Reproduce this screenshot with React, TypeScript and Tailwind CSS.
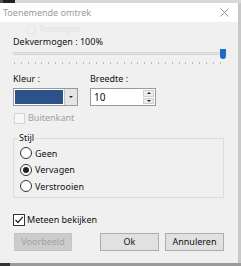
import React from 'react'

const font = { fontFamily: '"Noto Sans", "Open Sans", Arial, sans-serif' }

function Radio({ label, checked }: { label: string; checked?: boolean }) {
  return (
    <div className="flex items-center gap-[3px] h-[16.5px]">
      <span className="w-[12px] h-[12px] rounded-full border border-[#333] bg-white flex items-center justify-center">
        {checked && <span className="w-[6px] h-[6px] rounded-full bg-[#222]" />}
      </span>
      <span>{label}</span>
    </div>
  )
}

export default function App() {
  const ticks = Array.from({ length: 31 })
  return (
    <div className="w-[241px] h-[266px] bg-[#e8e8e8] flex flex-col overflow-hidden text-[9px] text-[#111]" style={font}>
      {/* background peeking through at top */}
      <div className="h-[3px] flex bg-[#d9d9d9]">
        <div className="w-[3px] bg-[#555]" />
        <div className="w-[12px] bg-[#222]" />
        <div className="flex-1" />
      </div>

      <div className="flex-1 flex border-r-[3px] border-[#c8c8c8]">
        <div className="flex-1 flex flex-col bg-[#f0f0f0]">
          {/* title bar */}
          <div className="h-[19px] bg-white flex items-center justify-between pl-[3px] pr-[9px]">
            <span className="text-[#9a9a9a] text-[9px]">Toenemende omtrek</span>
            <svg width="9" height="9" viewBox="0 0 10 10" className="text-[#8a8a8a]">
              <path d="M0.5 0.5 L9.5 9.5 M9.5 0.5 L0.5 9.5" stroke="currentColor" strokeWidth="1" />
            </svg>
          </div>

          <div className="flex-1 flex flex-col pl-[13px] pr-[12px]">
            {/* faint ghost from the window behind */}
            <div className="h-[12px] mt-[1px] pl-[14px] flex items-center gap-[3px] text-[8px] text-[#e2e2e2] leading-[12px]">
              <span className="w-[9px] h-[9px] border border-[#e6e6e6]" />
              <span>Toevoegen</span>
            </div>

            <div className="leading-[14px]">Dekvermogen : 100%</div>

            {/* slider */}
            <div className="relative h-[16px]">
              <div className="absolute left-0 right-0 top-[3px] h-[3px] bg-[#e3e3e3] border border-[#d6d6d6]" />
              <div className="absolute right-0 top-0 w-[6px] h-[10px] bg-[#1e6bc9] rounded-b-[3px]" />
              <div className="absolute left-[1px] right-[5px] top-[13px] flex justify-between">
                {ticks.map((_, i) => (
                  <span key={i} className="w-px h-[2px] bg-[#b8b8b8]" />
                ))}
              </div>
            </div>

            {/* Kleur / Breedte */}
            <div className="flex mt-[7px] gap-[12px]">
              <div className="flex flex-col w-[65px]">
                <span className="leading-[14px]">Kleur :</span>
                <div className="mt-[2px] h-[18px] flex border border-[#9a9a9a] bg-white">
                  <div className="flex-1 m-[1px] bg-[#2c5289]" />
                  <div className="w-[13px] bg-[#e5e5e5] border-l border-[#c4c4c4] flex items-center justify-center">
                    <span className="w-0 h-0 border-l-[2px] border-r-[2px] border-t-[2px] border-l-transparent border-r-transparent border-t-[#222]" />
                  </div>
                </div>
              </div>
              <div className="flex flex-col w-[66px]">
                <span className="leading-[14px]">Breedte :</span>
                <div className="mt-[2px] h-[18px] flex border border-[#9a9a9a] bg-white">
                  <span className="flex-1 pl-[3px] leading-[16px] text-[10px]">10</span>
                  <div className="w-[11px] my-[1px] mr-[1px] flex flex-col gap-px">
                    <div className="flex-1 bg-[#ececec] border border-[#cfcfcf] flex items-center justify-center">
                      <span className="w-0 h-0 border-l-[2px] border-r-[2px] border-b-[2px] border-l-transparent border-r-transparent border-b-[#222]" />
                    </div>
                    <div className="flex-1 bg-[#ececec] border border-[#cfcfcf] flex items-center justify-center">
                      <span className="w-0 h-0 border-l-[2px] border-r-[2px] border-t-[2px] border-l-transparent border-r-transparent border-t-[#222]" />
                    </div>
                  </div>
                </div>
              </div>
            </div>

            {/* Buitenkant (disabled) */}
            <div className="flex items-center gap-[3px] mt-[4px] h-[16px] pl-px">
              <span className="w-[11px] h-[11px] border border-[#d4d4d4] bg-[#f7f7f7]" />
              <span className="text-[#a0a0a0]">Buitenkant</span>
            </div>

            {/* Stijl group */}
            <div className="relative mt-[12px] mr-[2px] h-[60px] border border-[#dcdcdc] pt-[6px] pl-[6px] flex flex-col">
              <span className="absolute -top-[9px] left-[4px] px-px bg-[#f0f0f0] leading-[16px]">Stijl</span>
              <Radio label="Geen" />
              <Radio label="Vervagen" checked />
              <Radio label="Verstrooien" />
            </div>

            {/* Meteen bekijken */}
            <div className="flex items-center gap-[2px] mt-[14px] h-[16px]">
              <span className="w-[12px] h-[12px] border border-[#333] bg-white flex items-center justify-center">
                <svg width="10" height="10" viewBox="0 0 10 10">
                  <path d="M1.5 5 L4 7.5 L8.8 1.8" fill="none" stroke="#222" strokeWidth="1.2" />
                </svg>
              </span>
              <span>Meteen bekijken</span>
            </div>

            {/* buttons */}
            <div className="flex mt-[5px] h-[18px] pr-[2px]">
              <div className="w-[58px] ml-px bg-[#cccccc] border border-[#c4c4c4] text-[#a2a2a2] flex items-center justify-center">Voorbeeld</div>
              <div className="flex-1" />
              <div className="w-[59px] bg-[#e1e1e1] border border-[#adadad] flex items-center justify-center">Ok</div>
              <div className="w-[59px] ml-[6px] bg-[#e1e1e1] border border-[#adadad] flex items-center justify-center">Annuleren</div>
            </div>
          </div>
        </div>
      </div>

      {/* background peeking through at bottom */}
      <div className="h-[3px] flex bg-[#9a9a9a]">
        <div className="w-[10px] bg-[#333]" />
        <div className="flex-1" />
      </div>
    </div>
  )
}
